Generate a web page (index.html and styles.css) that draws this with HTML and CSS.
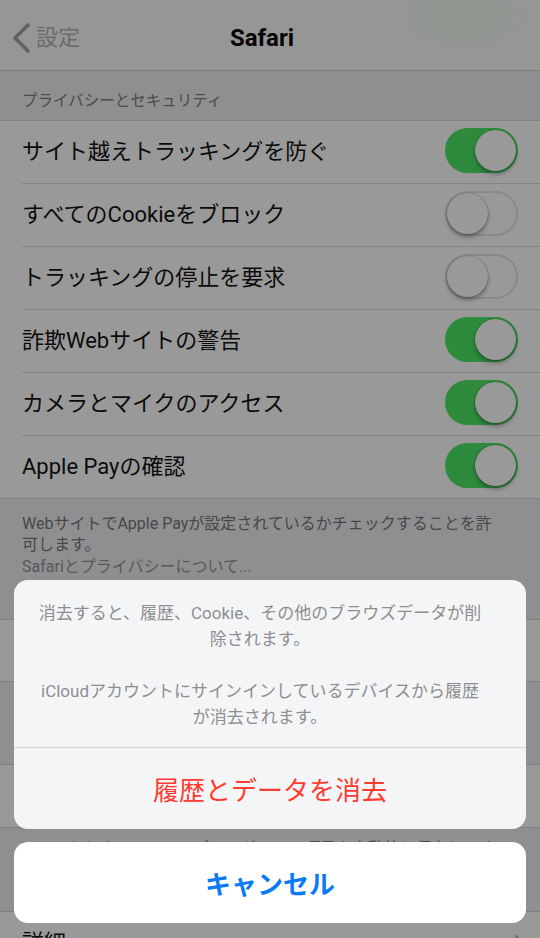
FILE: index.html
```html
<!DOCTYPE html>
<html lang="ja">
<head>
<meta charset="utf-8">
<title>Safari</title>
<link rel="stylesheet" href="styles.css">
</head>
<body>
<div class="screen">
  <header class="nav">
    <div class="nav-bar">
      <div class="back">
        <svg class="chev" width="18" height="30" viewBox="0 0 18 30"><polyline points="16,2 3,15 16,28" fill="none" stroke="#626262" stroke-width="3.6" stroke-linecap="round" stroke-linejoin="round"/></svg>
        <span class="back-label">設定</span>
      </div>
      <div class="title">Safari</div>
      <div></div>
    </div>
  </header>

  <div class="section-header">プライバシーとセキュリティ</div>
  <ul class="group">
    <li class="row"><div class="row-inner"><span class="label">サイト越えトラッキングを防ぐ</span><span class="switch on"><span class="knob"></span></span></div></li>
    <li class="row"><div class="row-inner"><span class="label">すべてのCookieをブロック</span><span class="switch"><span class="knob"></span></span></div></li>
    <li class="row"><div class="row-inner"><span class="label">トラッキングの停止を要求</span><span class="switch"><span class="knob"></span></span></div></li>
    <li class="row"><div class="row-inner"><span class="label">詐欺Webサイトの警告</span><span class="switch on"><span class="knob"></span></span></div></li>
    <li class="row"><div class="row-inner"><span class="label">カメラとマイクのアクセス</span><span class="switch on"><span class="knob"></span></span></div></li>
    <li class="row"><div class="row-inner"><span class="label">Apple Payの確認</span><span class="switch on"><span class="knob"></span></span></div></li>
  </ul>
  <div class="section-footer">
    <p><span class="line">WebサイトでApple Payが設定されているかチェックすることを許</span><span class="line">可します。</span></p>
    <p class="link">Safariとプライバシーについて...</p>
  </div>

  <div class="cell-center">履歴とWebサイトデータを消去</div>

  <div class="section-header tall">リーディングリスト</div>
  <ul class="group">
    <li class="row"><div class="row-inner"><span class="label">自動的にオフライン用に保存</span><span class="switch on"><span class="knob"></span></span></div></li>
  </ul>
  <div class="section-footer short">
    <p>iCloudからすべてのリーディングリスト項目を自動的に保存してオフラインで読めるようにします。</p>
  </div>

  <ul class="group">
    <li class="row"><div class="row-inner"><span class="label">詳細</span><svg class="disclosure" width="10" height="18" viewBox="0 0 10 18"><polyline points="1.5,1.5 8.5,9 1.5,16.5" fill="none" stroke="#6e6e6e" stroke-width="2"/></svg></div></li>
  </ul>

  <div class="sheet">
    <div class="sheet-main">
      <div class="sheet-msg">
        <p><span class="line">消去すると、履歴、Cookie、その他のブラウズデータが削</span><span class="line">除されます。</span></p>
        <p><span class="line">iCloudアカウントにサインインしているデバイスから履歴</span><span class="line">が消去されます。</span></p>
      </div>
      <div class="sheet-action">履歴とデータを消去</div>
    </div>
    <div class="sheet-cancel">キャンセル</div>
  </div>
</div>
</body>
</html>
```

FILE: styles.css
```css
* { box-sizing: border-box; }
html, body {
  margin: 0;
  padding: 0;
}
body {
  width: 540px;
  height: 938px;
  overflow: hidden;
  background: #8f8f92;
  font-family: Roboto, "Noto Sans CJK JP", sans-serif;
  color: #0b0b0b;
}
p { margin: 0; }
ul { margin: 0; padding: 0; list-style: none; }

.screen {
  position: relative;
  width: 540px;
  height: 938px;
  overflow: hidden;
}

/* nav */
.nav {
  height: 71px;
  padding-top: 14px;
  background:
    radial-gradient(ellipse 80px 50px at 465px 14px, rgba(125, 155, 125, 0.28), rgba(125, 155, 125, 0) 100%),
    #969696;
  border-bottom: 1px solid #7c7c7c;
}
.nav-bar {
  height: 48px;
  display: grid;
  grid-template-columns: 1fr auto 1fr;
  align-items: center;
}
.back {
  display: flex;
  align-items: center;
  padding-left: 12px;
}
.chev { display: block; }
.back-label {
  margin-left: 6px;
  font-size: 22px;
  line-height: 30px;
  color: #6b6b6b;
}
.title {
  padding-right: 16px;
  font-size: 24px;
  font-weight: 700;
  line-height: 30px;
  color: #050505;
}

/* sections */
.section-header {
  height: 49px;
  padding: 21px 22px 0;
  font-size: 15.5px;
  line-height: 18px;
  color: #4b4b4b;
}
.section-header.tall {
  height: 82px;
  padding-top: 54px;
}
.group {
  background: #999999;
  border-top: 1px solid #808080;
  border-bottom: 1px solid #808080;
}
.row {
  padding-left: 22px;
}
.row-inner {
  height: 63px;
  padding-right: 22px;
  border-bottom: 1px solid #838383;
  display: flex;
  align-items: center;
  justify-content: space-between;
}
.row:last-child .row-inner {
  height: 62px;
  border-bottom: 0;
}
.label {
  font-size: 22px;
  line-height: 30px;
  color: #0b0b0b;
  white-space: nowrap;
}

.switch {
  width: 73px;
  height: 45px;
  border-radius: 23px;
  border: 2px solid #898989;
  background: #999999;
  display: flex;
  align-items: center;
  justify-content: flex-start;
  margin-top: -3px;
}
.switch.on {
  background: #2e8a3d;
  border-color: #2e8a3d;
  justify-content: flex-end;
}
.knob {
  width: 41px;
  height: 41px;
  border-radius: 50%;
  background: #999999;
  box-shadow: 0 3px 4px rgba(0, 0, 0, 0.32), 0 0 0 0.6px rgba(0, 0, 0, 0.18);
}
.disclosure { display: block; margin-right: -6px; }

.section-footer {
  height: 120px;
  padding: 14px 22px 0;
  font-size: 16px;
  line-height: 21px;
  color: #474747;
}
.section-footer.short {
  height: 83px;
  padding-top: 10px;
}
.line { display: block; white-space: nowrap; }
.section-footer .link {
  margin-top: 1px;
  color: #585858;
}

.cell-center {
  height: 63px;
  background: #999999;
  border-top: 1px solid #808080;
  border-bottom: 1px solid #808080;
  display: flex;
  align-items: center;
  justify-content: center;
  font-size: 22px;
  color: #3a3a3a;
}

/* action sheet */
.sheet {
  position: absolute;
  left: 14px;
  right: 14px;
  bottom: 15px;
  display: flex;
  flex-direction: column;
  gap: 13px;
  font-family: "Noto Sans CJK JP", sans-serif;
}
.sheet-main {
  background: #f4f5f7;
  border-radius: 14px;
  overflow: hidden;
}
.sheet-msg {
  padding: 20px 30px 17px 10px;
  border-bottom: 1px solid #d6d6d9;
  text-align: center;
  font-family: Roboto, "Noto Sans CJK JP", sans-serif;
  font-size: 17px;
  line-height: 26px;
  color: #8e8e91;
}
.sheet-msg p + p { margin-top: 26px; }
.sheet-action {
  height: 81px;
  display: flex;
  align-items: center;
  justify-content: center;
  font-size: 26px;
  color: #ff3b30;
}
.sheet-cancel {
  height: 81px;
  background: #ffffff;
  border-radius: 14px;
  display: flex;
  align-items: center;
  justify-content: center;
  font-size: 26px;
  font-weight: 700;
  color: #0a7bf5;
}
```
